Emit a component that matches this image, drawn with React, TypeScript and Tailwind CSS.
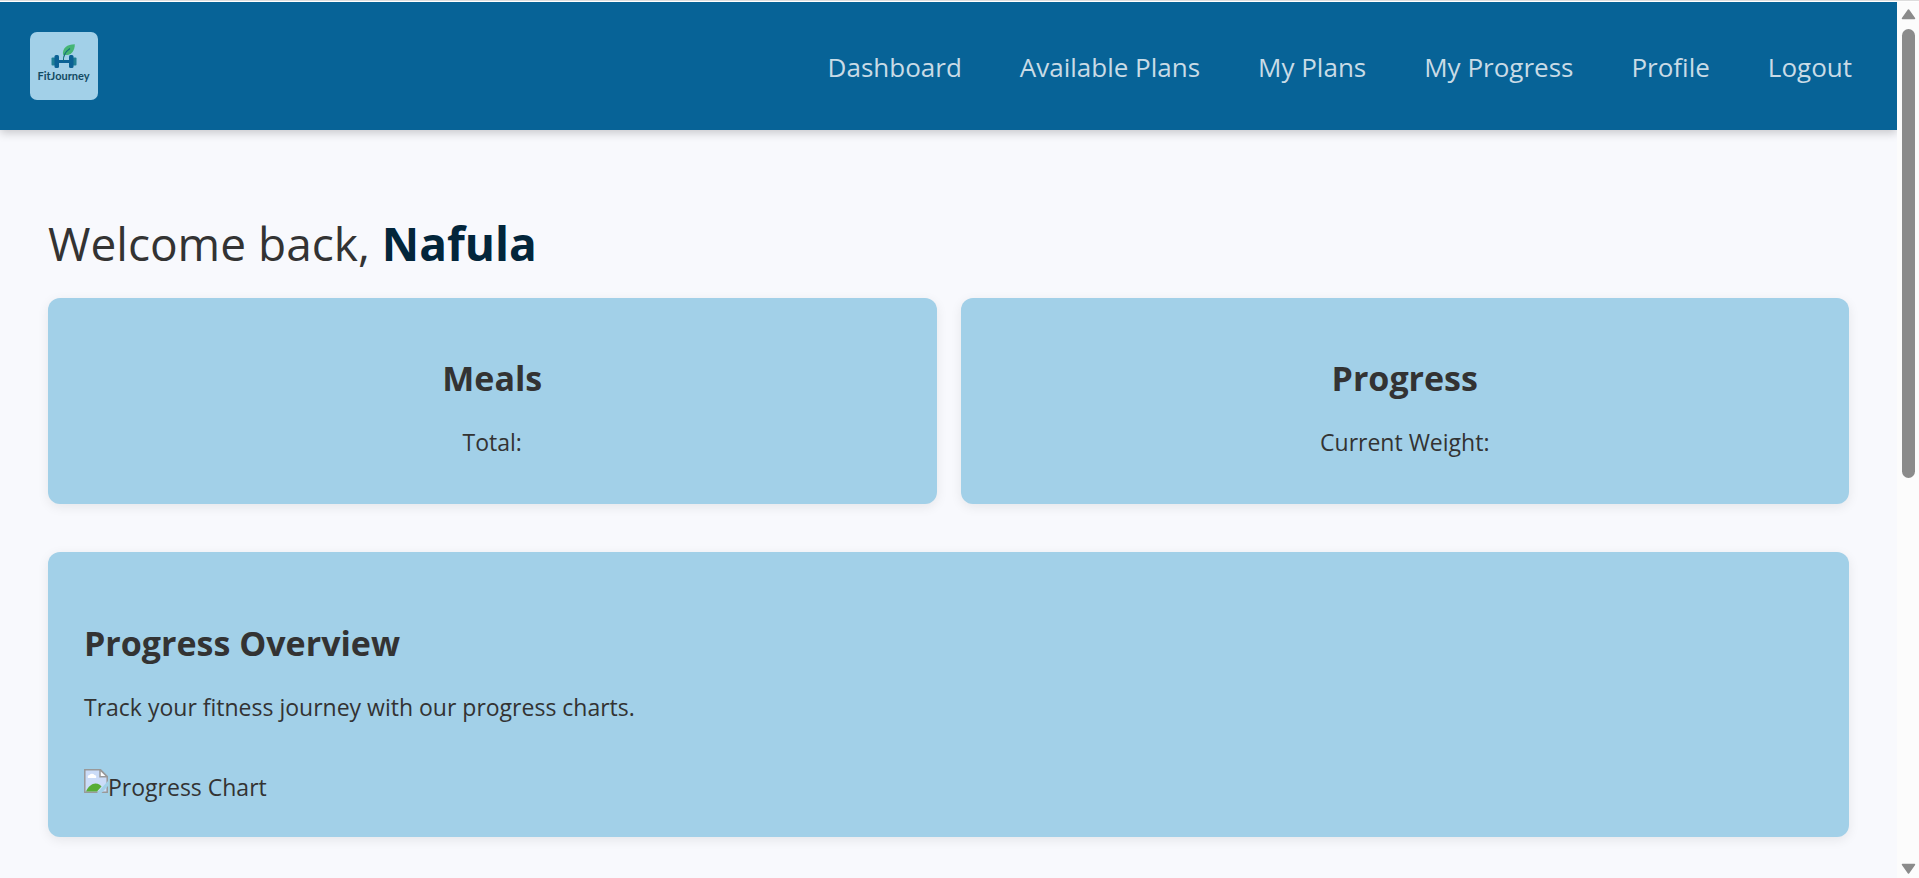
const links = ["Dashboard", "Available Plans", "My Plans", "My Progress", "Profile", "Logout"];

function Logo() {
  return (
    <svg viewBox="0 0 68 68" className="block h-[68px] w-[68px]" role="img" aria-label="FitJourney">
      <rect width="68" height="68" rx="7" fill="#a2d0e8" />
      <rect x="21.5" y="25.5" width="4" height="8" rx="1" fill="#1f7f95" />
      <rect x="42.5" y="25.5" width="4" height="8" rx="1" fill="#1f7f95" />
      <rect x="24.5" y="23" width="4.5" height="13" rx="1.5" fill="#0a6195" />
      <rect x="39" y="23" width="4.5" height="13" rx="1.5" fill="#0a6195" />
      <rect x="28" y="28" width="12" height="3" fill="#0a6195" />
      <path d="M33 22.8C32.2 16 37 12.3 44.8 12.2C44.8 19 41 24.5 33 22.8Z" fill="#45b574" />
      <path d="M33.500 29C33 24 35 20 40 16.5" fill="none" stroke="#14707a" strokeWidth="1.1" />
      <text x="33.5" y="48" textAnchor="middle" fontFamily="Lato, sans-serif" fontWeight="700" fontSize="11" fill="#124a63">
        FitJourney
      </text>
    </svg>
  );
}

function MissingImage() {
  return (
    <svg viewBox="0 0 24 24" className="mb-3 h-6 w-6 shrink-0" aria-hidden="true">
      <path d="M.8.8H16.5L23.2 7.5V23.2H.8Z" fill="#cbdcf8" stroke="#999" strokeWidth="1.5" />
      <path d="M4 9a2 2 0 0 1 1.500-3a3 3 0 0 1 5 0a2 2 0 0 1 1.5 3Z" fill="#fff" />
      <path d="M2 22.5C4 17.500 8 14.5 11.500 14.5C14.5 14.5 16.5 16 17.5 17.5L13 22.5Z" fill="#58ad36" />
      <path d="M16 .8V7.8H23.2Z" fill="#fff" stroke="#999" strokeWidth="1.5" />
      <path d="M13 24L24 12V17L17.5 24Z" fill="#a2d0e8" />
    </svg>
  );
}

function StatCard({ title, label }: { title: string; label: string }) {
  return (
    <section className="flex-1 rounded-xl bg-[#a2d0e8] px-9 pt-14 pb-11 text-center shadow-[0_3px_12px_rgba(0,0,0,0.08)]">
      <h2 className="text-[34px] leading-[48px] font-bold">{title}</h2>
      <p className="mt-[22px] text-[23px] leading-9">{label}</p>
    </section>
  );
}

export default function App() {
  return (
    <div className="flex min-h-screen flex-col bg-[#f8f9fd] font-['Open_Sans','Noto_Sans',sans-serif] text-[#333]">
      <div className="h-0.5 border-t border-[#ddd] bg-white" />
      <div className="flex flex-1">
        <div className="min-w-0 flex-1 overflow-hidden">
          <header className="flex h-32 items-center justify-between bg-[#076397] pr-[45px] pl-[30px] shadow-[0_3px_9px_rgba(0,0,0,0.2)]">
            <a href="#home"><Logo /></a>
            <nav className="flex gap-[58px] pt-0.5">
              {links.map((link) => (
                <a key={link} href={"#" + link.toLowerCase().replace(" ", "-")} className="text-[26px] leading-10 text-[#c9dbe6]">
                  {link}
                </a>
              ))}
            </nav>
          </header>
          <main className="px-12 pt-[78px] pb-10">
            <h1 className="text-[46px] leading-[70px]">
              Welcome back, <strong className="font-bold text-[#03263b]">Nafula</strong>
            </h1>
            <div className="mt-5 flex gap-6">
              <StatCard title="Meals" label="Total:" />
              <StatCard title="Progress" label="Current Weight:" />
            </div>
            <section className="mt-12 rounded-xl bg-[#a2d0e8] px-9 pt-[67px] pb-8 shadow-[0_3px_12px_rgba(0,0,0,0.08)]">
              <h2 className="text-[34px] leading-[48px] font-bold">Progress Overview</h2>
              <p className="mt-[22px] text-[23px] leading-9">Track your fitness journey with our progress charts.</p>
              <div className="mt-11 flex items-center text-[23px] leading-9">
                <MissingImage />
                <span>Progress Chart</span>
              </div>
            </section>
          </main>
        </div>
        <div className="flex w-[22px] flex-col items-center bg-[#fcfcfc] pt-[6px] pb-[3px]" aria-hidden="true">
          <svg viewBox="0 0 15 12" className="h-3 w-[15px]">
            <path d="M7.5 2L13.5 10.500H1.5Z" fill="#8b8b8b" stroke="#8b8b8b" strokeWidth="1.5" strokeLinejoin="round" />
          </svg>
          <div className="flex w-[13px] flex-1 flex-col py-[9px]">
            <div className="h-[54.4%] rounded-full bg-[#8b8b8b]" />
          </div>
          <svg viewBox="0 0 15 12" className="h-3 w-[15px]">
            <path d="M7.5 10L13.5 1.500H1.5Z" fill="#8b8b8b" stroke="#8b8b8b" strokeWidth="1.5" strokeLinejoin="round" />
          </svg>
        </div>
      </div>
    </div>
  );
}
